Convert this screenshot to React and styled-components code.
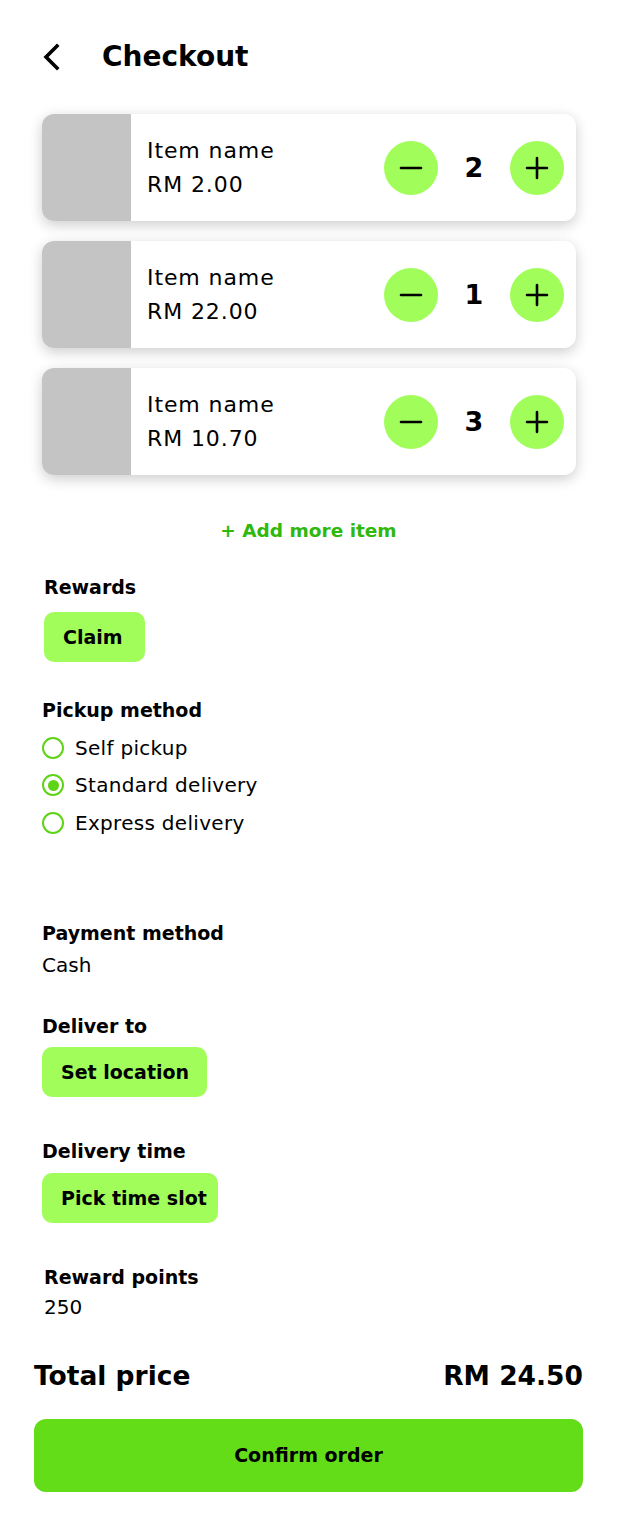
import React, { useState } from 'react';
import styled, { createGlobalStyle } from 'styled-components';

const GlobalStyle = createGlobalStyle`
  * { box-sizing: border-box; }
  body {
    margin: 0;
    background: #ffffff;
    font-family: "DejaVu Sans", Inter, sans-serif;
    color: #000000;
  }
`;

const Page = styled.div`
  width: 617px;
  min-height: 1517px;
  padding: 0 34px;
`;

const Header = styled.header`
  display: flex;
  align-items: center;
  gap: 39px;
  height: 114px;
  padding-left: 7px;
`;

const BackButton = styled.button`
  border: none;
  background: none;
  padding: 0;
  display: flex;
  cursor: pointer;
`;

const Title = styled.h1`
  margin: 0;
  font-size: 28px;
  font-weight: 700;
  line-height: 34px;
`;

const CardList = styled.div`
  display: flex;
  flex-direction: column;
  gap: 20px;
  padding: 0 7px 0 8px;
`;

const Card = styled.div`
  display: flex;
  align-items: center;
  height: 107px;
  border-radius: 12px;
  background: #ffffff;
  overflow: hidden;
  box-shadow: 0 4px 14px rgba(0, 0, 0, 0.2);
`;

const Thumb = styled.div`
  width: 89px;
  align-self: stretch;
  background: #c4c4c4;
`;

const ItemInfo = styled.div`
  flex: 1;
  padding-left: 16px;
  font-size: 22px;
  letter-spacing: 0.9px;
  line-height: 34px;
`;

const Stepper = styled.div`
  display: flex;
  align-items: center;
  padding-right: 12px;
`;

const RoundButton = styled.button`
  width: 54px;
  height: 54px;
  border-radius: 50%;
  border: none;
  background: #a0fd5a;
  display: flex;
  align-items: center;
  justify-content: center;
  padding: 0;
  cursor: pointer;
`;

const Qty = styled.span`
  width: 72px;
  text-align: center;
  font-size: 27px;
  font-weight: 700;
`;

const AddMore = styled.div`
  text-align: center;
  margin-top: 43px;
  color: #2fb80e;
  font-size: 18.5px;
  font-weight: 700;
  line-height: 26px;
`;

const Section = styled.section`
  margin-top: ${p => p.$top}px;
  padding-left: ${p => p.$indent || 8}px;
`;

const Label = styled.div`
  font-size: 19px;
  font-weight: 700;
  line-height: 26px;
`;

const Value = styled.div`
  margin-top: ${p => p.$top || 0}px;
  font-size: 20px;
  line-height: 30px;
`;

const PillButton = styled.button`
  display: block;
  margin-top: ${p => p.$top}px;
  height: 50px;
  padding: 0 ${p => p.$pad || 19}px 0 19px;
  border: none;
  border-radius: 10px;
  background: #a0fd5a;
  font-family: inherit;
  font-size: 19px;
  font-weight: 700;
  color: #000000;
  cursor: pointer;
`;

const RadioList = styled.div`
  display: flex;
  flex-direction: column;
  margin-top: 6px;
`;

const RadioRow = styled.label`
  display: flex;
  align-items: center;
  gap: 11px;
  height: 37.5px;
  font-size: 20px;
  letter-spacing: 0.3px;
  cursor: pointer;
`;

const RadioCircle = styled.span`
  flex: none;
  width: 22px;
  height: 22px;
  border-radius: 50%;
  border: 2.5px solid #5ed317;
  display: flex;
  align-items: center;
  justify-content: center;
  &::after {
    content: '';
    width: 11px;
    height: 11px;
    border-radius: 50%;
    background: ${p => (p.$checked ? '#5ed317' : 'transparent')};
  }
`;

const TotalRow = styled.div`
  display: flex;
  justify-content: space-between;
  align-items: center;
  margin-top: 37px;
  line-height: 34px;
  font-size: 26.5px;
  font-weight: 700;
`;

const ConfirmButton = styled.button`
  display: block;
  width: 100%;
  margin-top: 26px;
  height: 73px;
  border: none;
  border-radius: 12px;
  background: #63dd17;
  font-family: inherit;
  font-size: 19px;
  font-weight: 700;
  color: #000000;
  cursor: pointer;
`;

const Minus = () => (
  <svg width="26" height="26" viewBox="0 0 26 26">
    <path d="M3 13h20" stroke="#000" strokeWidth="2.6" strokeLinecap="round" />
  </svg>
);

const Plus = () => (
  <svg width="26" height="26" viewBox="0 0 26 26">
    <path d="M3 13h20M13 3v20" stroke="#000" strokeWidth="2.6" strokeLinecap="round" />
  </svg>
);

const items = [
  { name: 'Item name', price: 'RM 2.00', qty: 2 },
  { name: 'Item name', price: 'RM 22.00', qty: 1 },
  { name: 'Item name', price: 'RM 10.70', qty: 3 },
];

const methods = ['Self pickup', 'Standard delivery', 'Express delivery'];

export default function App() {
  const [method, setMethod] = useState(1);

  return (
    <Page>
      <GlobalStyle />
      <Header>
        <BackButton aria-label="Back">
          <svg width="22" height="28" viewBox="0 0 22 28">
            <path d="M16 3L5 14l11 11" fill="none" stroke="#000" strokeWidth="3.6" strokeLinecap="square" />
          </svg>
        </BackButton>
        <Title>Checkout</Title>
      </Header>

      <CardList>
        {items.map((item, i) => (
          <Card key={i}>
            <Thumb />
            <ItemInfo>
              <div>{item.name}</div>
              <div>{item.price}</div>
            </ItemInfo>
            <Stepper>
              <RoundButton aria-label="Decrease"><Minus /></RoundButton>
              <Qty>{item.qty}</Qty>
              <RoundButton aria-label="Increase"><Plus /></RoundButton>
            </Stepper>
          </Card>
        ))}
      </CardList>

      <AddMore>+ Add more item</AddMore>

      <Section $top={30} $indent={10}>
        <Label>Rewards</Label>
        <PillButton $top={12} $pad={22}>Claim</PillButton>
      </Section>

      <Section $top={35}>
        <Label>Pickup method</Label>
        <RadioList>
          {methods.map((m, i) => (
            <RadioRow key={m} onClick={() => setMethod(i)}>
              <RadioCircle $checked={method === i} />
              {m}
            </RadioRow>
          ))}
        </RadioList>
      </Section>

      <Section $top={78}>
        <Label>Payment method</Label>
        <Value $top={4}>Cash</Value>
      </Section>

      <Section $top={33}>
        <Label>Deliver to</Label>
        <PillButton $top={8} $pad={18}>Set location</PillButton>
      </Section>

      <Section $top={41}>
        <Label>Delivery time</Label>
        <PillButton $top={9} $pad={11}>Pick time slot</PillButton>
      </Section>

      <Section $top={41} $indent={10}>
        <Label>Reward points</Label>
        <Value $top={2}>250</Value>
      </Section>

      <TotalRow>
        <span>Total price</span>
        <span>RM 24.50</span>
      </TotalRow>

      <ConfirmButton>Confirm order</ConfirmButton>
    </Page>
  );
}
